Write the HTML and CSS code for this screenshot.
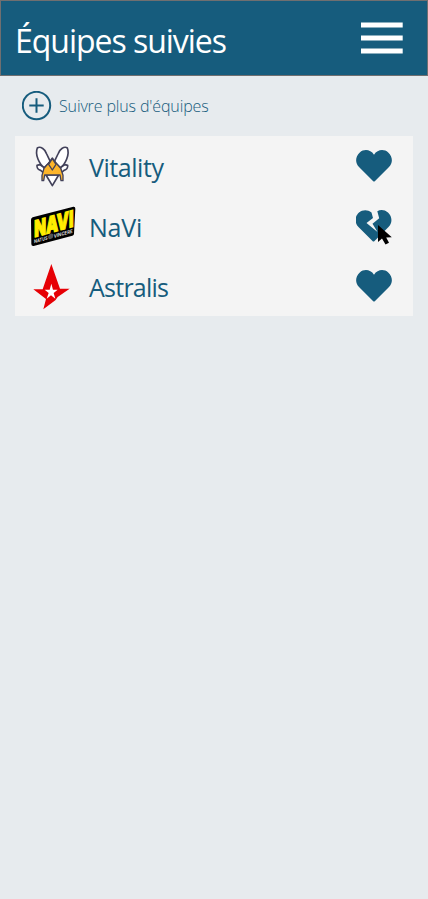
FILE: index.html
```html
<!DOCTYPE html>
<html lang="fr">
<head>
<meta charset="utf-8">
<title>Équipes suivies</title>
<link rel="stylesheet" href="styles.css">
</head>
<body>
<header class="header">
  <h1 class="title">Équipes suivies</h1>
  <svg class="menu" viewBox="0 0 42 32"><path d="M0 .5H41.7V5.6H0zM0 13.5H41.7V18.6H0zM0 26.5H41.7V31.6H0z"/></svg>
</header>
<main class="main">
  <div class="more">
    <svg class="plus" viewBox="0 0 30 30"><circle cx="14.500" cy="14.500" r="13.700"/><path d="M14.500 7.300v14.400M7.300 14.500h14.400"/></svg>
    <span class="more-label">Suivre plus d'équipes</span>
  </div>
  <ul class="teams">
    <li class="team">
      <svg class="logo" viewBox="0 0 192 156">
        <g stroke="#42415a" stroke-width="5" stroke-linejoin="round">
          <path fill="#fff" d="M78 105L97 137L116 105z"/>
          <path fill="#fff" d="M73 83L59 74L51 76Q50 88 62 91L70 98z"/>
          <path fill="#fff" d="M121 83L135 74L143 76Q144 88 132 91L124 98z"/>
          <path fill="#fff" d="M52 24C61 17 77 29 80 42L91 65L73 83C58 73 44 43 52 24z"/>
          <path fill="#fff" d="M142 24C133 17 117 29 114 42L103 65L121 83C136 73 150 43 142 24z"/>
          <path fill="#fdb52a" stroke-width="4" d="M97 54L85 70L72 85L66 106V122H71L74 105H120L123 122H129V106L122 85L109 70z"/>
          <path fill="#fdb52a" stroke-width="4" d="M97 56L86 73L97 90L108 73z"/>
        </g>
      </svg>
      <span class="name name-vitality">Vitality</span>
      <svg class="heart" viewBox="0 0 36 32"><path d="M18 4.800C14.500-.7 8-1.200 3.800 2.500C-.9 6.800-1 13 3 17L17 31Q18 32 19 31L33 17C37 13 36.900 6.800 32.200 2.500C28-1.200 21.500-.7 18 4.800z"/></svg>
    </li>
    <li class="team">
      <svg class="logo" viewBox="0 0 192 156">
        <path d="M38 52L160 20Q166 19 166 26L162 101Q162 105 157 107L41 138Q34 139 34 132L33 60Q33 54 38 52z"/>
        <g transform="matrix(1 -.27 0 1 0 0)">
          <text class="navi" x="43" y="123" textLength="117" lengthAdjust="spacingAndGlyphs">NAVI</text>
          <text class="navi-sub" x="42" y="141" textLength="41" lengthAdjust="spacingAndGlyphs">NATUS</text>
          <circle cx="92" cy="134" r="8" fill="#555"/>
          <text class="navi-sub" x="101" y="141" textLength="57" lengthAdjust="spacingAndGlyphs">VINCERE</text>
        </g>
      </svg>
      <span class="name name-navi">NaVi</span>
      <span class="toggle">
        <svg class="heart" viewBox="0 0 36 32"><path d="M15.500 2.500C11.500-.9 6.500-.4 3 2.500C-1.500 6.500-1.500 13 2.500 17L16.500 31Q17.500 32 18.500 31L32.500 17C36.500 13 36.500 6.500 32 2.500C28.500-.5 24.500-.6 21.300 1.200L23.200 8.300L16.500 13.700L21.500 22L10.500 13L17 8z"/></svg>
        <svg class="cursor" viewBox="0 0 14 20"><path d="M0 0V17L4 13.500L7.500 19.500L11 17.800L8.200 12.500L13.800 12.200z"/></svg>
      </span>
    </li>
    <li class="team">
      <svg class="logo" viewBox="0 0 192 156">
        <path fill="#e60005" d="M94 12L120 86H149L113 111L106 121L70 148L78 117L40 88H68z"/>
        <path fill="#fff" d="M94 71L99 89H113L101 99L106 116L93 106L80 116L86 99L74 89H89z"/>
      </svg>
      <span class="name name-astralis">Astralis</span>
      <svg class="heart" viewBox="0 0 36 32"><path d="M18 4.800C14.500-.7 8-1.200 3.800 2.500C-.9 6.800-1 13 3 17L17 31Q18 32 19 31L33 17C37 13 36.900 6.800 32.200 2.500C28-1.200 21.500-.7 18 4.800z"/></svg>
    </li>
  </ul>
</main>
</body>
</html>
```
FILE: styles.css
```css
* { box-sizing: border-box; }
body {
  margin: 0;
  min-height: 100vh;
  background: #e7ebee;
  color: #165c7d;
  font-family: "Segoe UI", "Open Sans", "Noto Sans", sans-serif;
}
.header {
  display: flex;
  align-items: center;
  justify-content: space-between;
  height: 76px;
  padding: 0 24px 0 14px;
  background: #165c7d;
  border: 1px solid #706f70;
}
.title {
  margin: 5px 0 0;
  color: #fff;
  font-size: 32px;
  font-weight: 400;
  line-height: 44px;
  letter-spacing: -1.03px;
  white-space: nowrap;
}
.menu { width: 42px; height: 32px; fill: #fff; }
.main { padding: 0 15px; }
.more {
  display: flex;
  align-items: center;
  gap: 7px;
  height: 60px;
  padding-left: 7px;
}
.plus { width: 30px; height: 30px; fill: none; stroke: #165c7d; stroke-width: 2; }
.more-label { font-size: 16px; font-weight: 300; letter-spacing: -0.13px; line-height: 22px; }
.teams { margin: 0; padding: 0; list-style: none; background: #f4f4f4; }
.team {
  display: flex;
  align-items: center;
  height: 60px;
  padding: 0 21px 0 5px;
}
.logo { width: 64px; height: 52px; overflow: visible; }
.name {
  flex: 1;
  margin: 2px 0 0 5px;
  font-size: 25px;
  font-weight: 400;
  line-height: 36px;
}
.name-vitality { letter-spacing: -0.45px; }
.name-navi { letter-spacing: -0.2px; }
.name-astralis { letter-spacing: -0.75px; }
.heart { display: block; width: 36px; height: 32px; fill: #165c7d; }
.toggle { position: relative; }
.cursor { position: absolute; left: 22px; top: 15px; width: 14px; height: 20px; fill: #000; }
.navi { fill: #ffed00; stroke: #ffed00; stroke-width: 4; font: 900 68px Inter, sans-serif; }
.navi-sub { fill: #ddd; font: 700 15px Inter, sans-serif; }
```
